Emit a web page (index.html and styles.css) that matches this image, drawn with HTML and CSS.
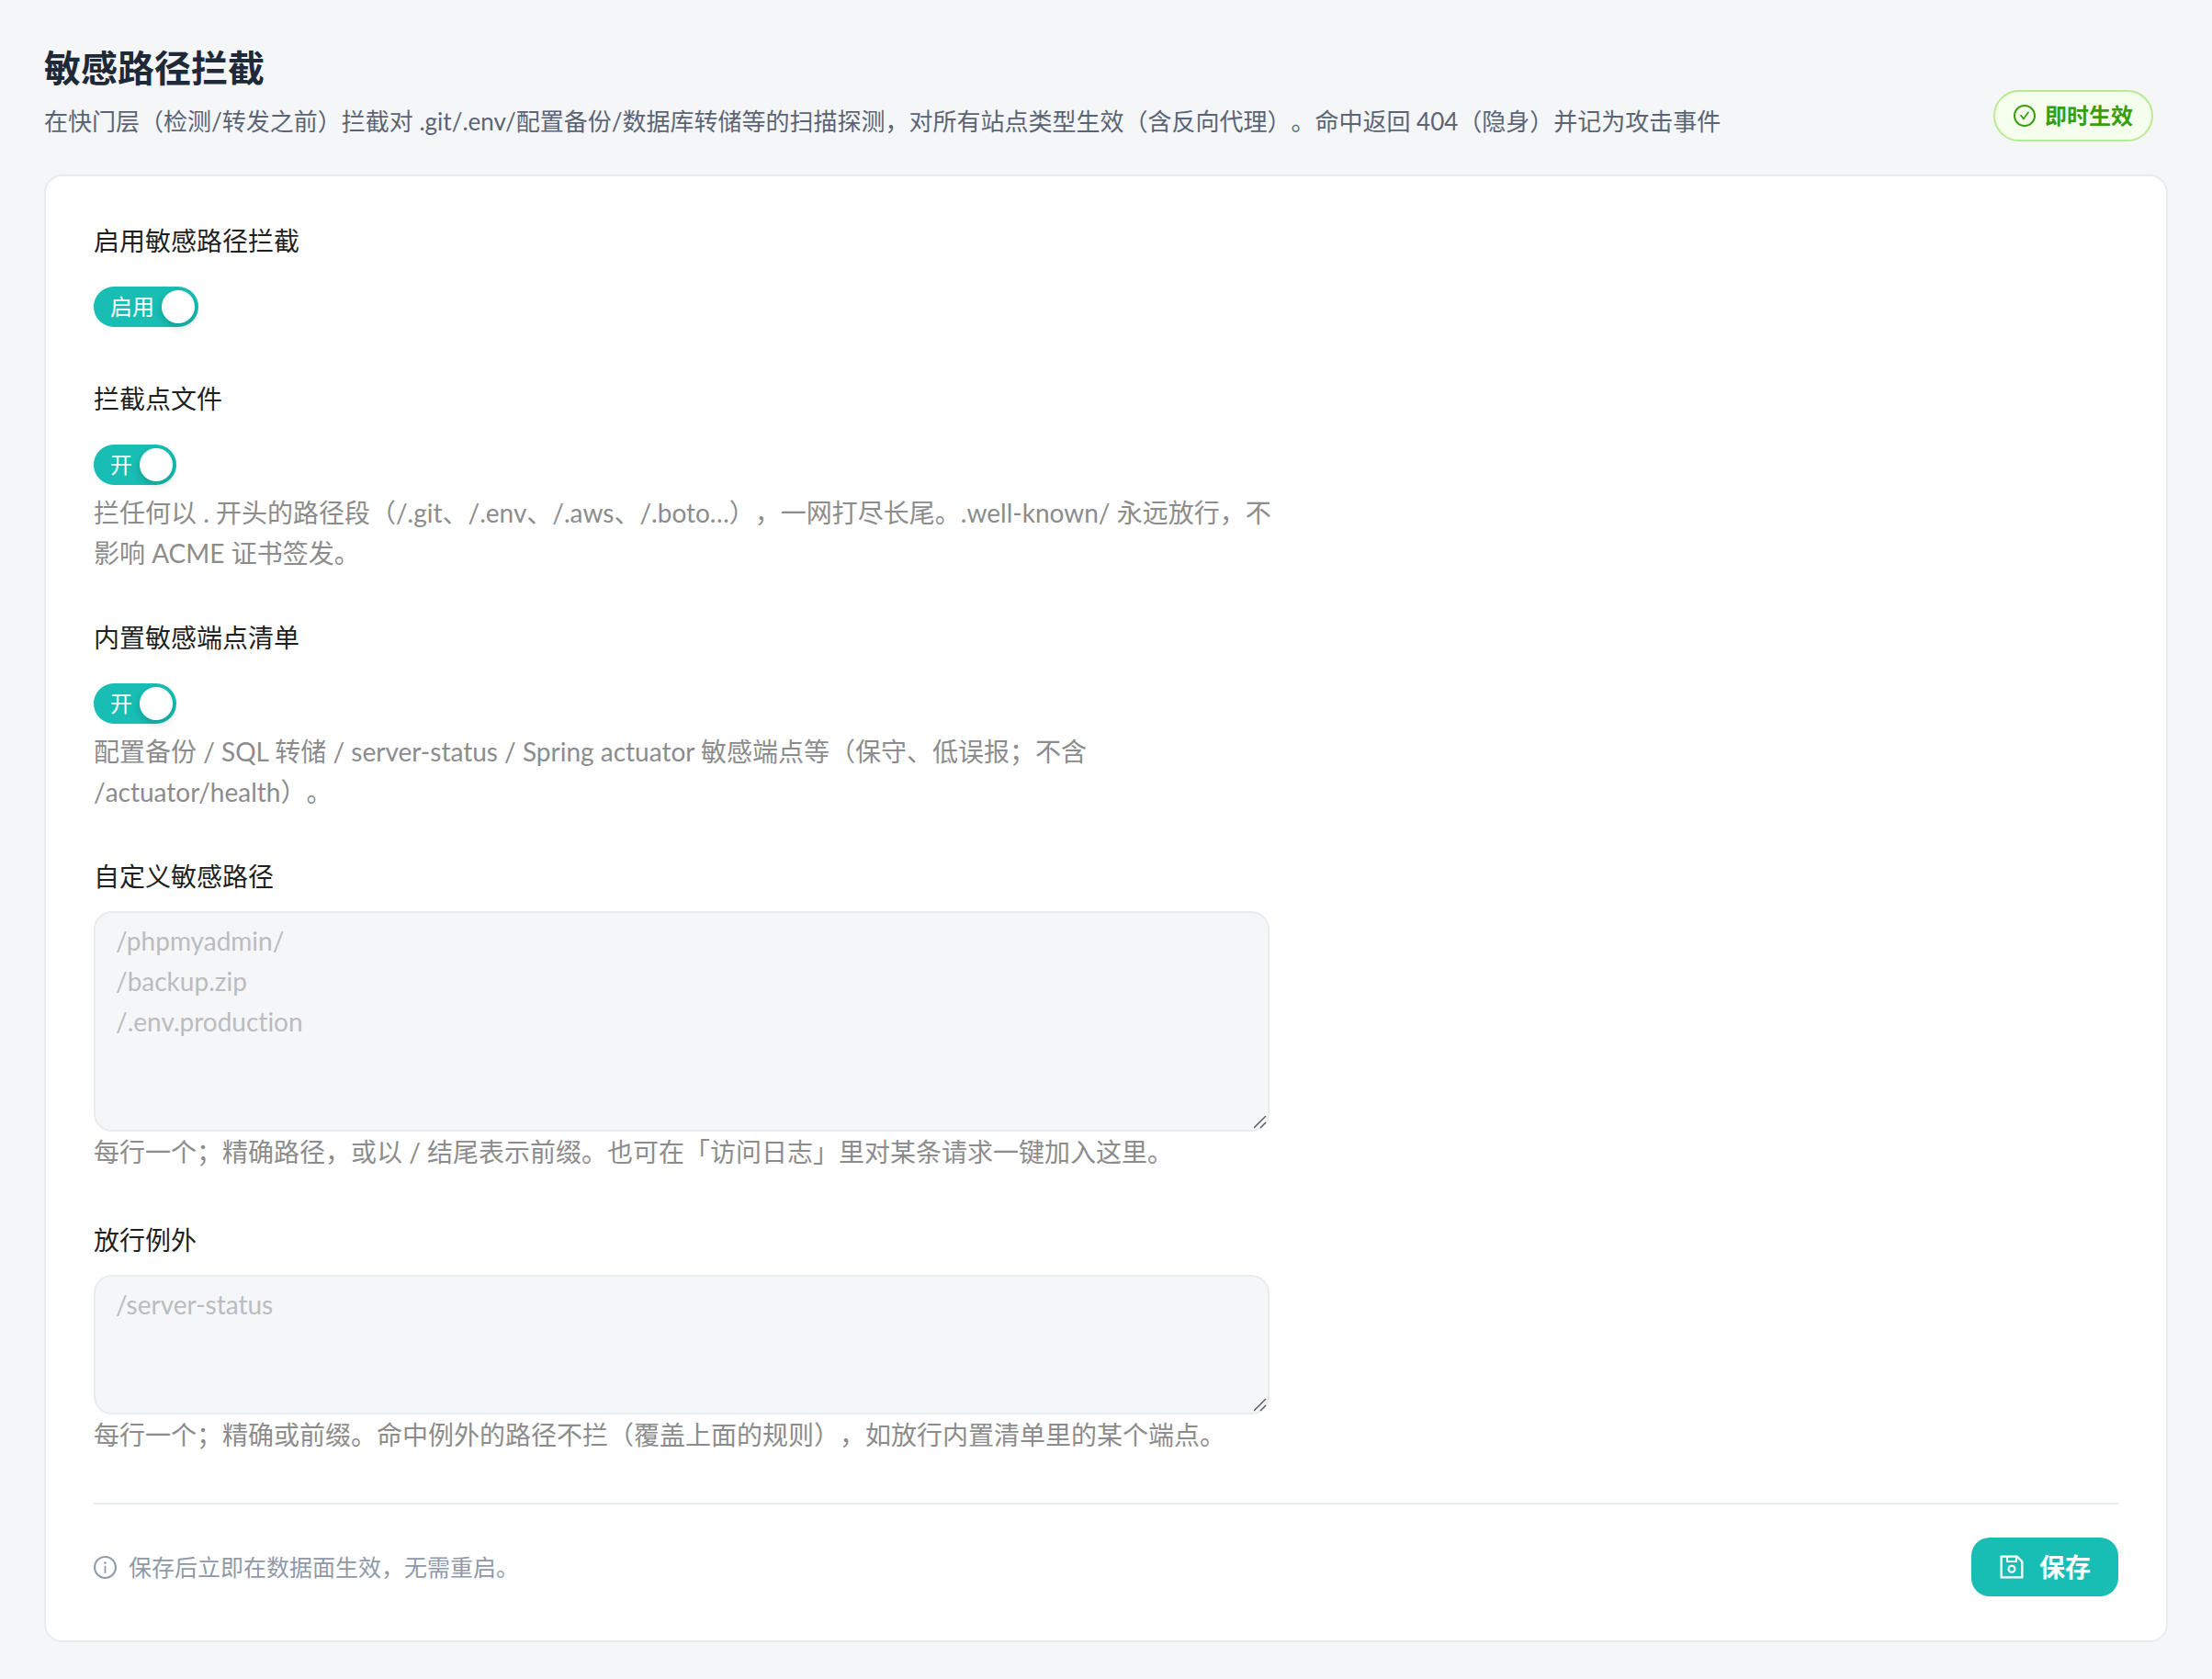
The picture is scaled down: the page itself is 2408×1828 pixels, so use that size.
FILE: index.html
```html
<!DOCTYPE html>
<html lang="zh-CN">
<head>
  <meta charset="UTF-8">
  <meta name="viewport" content="width=device-width, initial-scale=1">
  <title>敏感路径拦截</title>
  <link rel="stylesheet" href="styles.css">
</head>
<body>
  <header class="page-header">
    <div class="page-heading">
      <h1>敏感路径拦截</h1>
      <p>在快门层（检测/转发之前）拦截对 .git/.env/配置备份/数据库转储等的扫描探测，对所有站点类型生效（含反向代理）。命中返回 404（隐身）并记为攻击事件</p>
    </div>
    <span class="badge">
      <svg class="badge-icon" viewBox="64 64 896 896" fill="currentColor" aria-hidden="true">
        <path d="M699 353h-46.9c-10.2 0-19.9 4.9-25.9 13.3L469 584.3l-71.2-98.8c-6-8.3-15.6-13.3-25.9-13.3H325c-6.5 0-10.3 7.4-6.5 12.7l124.6 172.8a31.8 31.8 0 0051.7 0l210.6-292c3.9-5.3.1-12.7-6.4-12.7z"/>
        <path d="M512 64C264.6 64 64 264.6 64 512s200.6 448 448 448 448-200.6 448-448S759.4 64 512 64zm0 820c-205.4 0-372-166.6-372-372s166.6-372 372-372 372 166.6 372 372-166.6 372-372 372z"/>
      </svg>
      即时生效
    </span>
  </header>

  <form class="card">
    <div class="field">
      <label class="field-label" for="enabled">启用敏感路径拦截</label>
      <div class="field-control">
        <label class="switch"><span>启用</span><input type="checkbox" id="enabled" checked></label>
      </div>
    </div>

    <div class="field">
      <label class="field-label" for="dotfiles">拦截点文件</label>
      <div class="field-control">
        <label class="switch"><span>开</span><input type="checkbox" id="dotfiles" checked></label>
      </div>
      <p class="help">拦任何以 . 开头的路径段（/.git、/.env、/.aws、/.boto…），一网打尽长尾。.well-known/ 永远放行，不影响 ACME 证书签发。</p>
    </div>

    <div class="field">
      <label class="field-label" for="builtin">内置敏感端点清单</label>
      <div class="field-control">
        <label class="switch"><span>开</span><input type="checkbox" id="builtin" checked></label>
      </div>
      <p class="help">配置备份 / SQL 转储 / server-status / Spring actuator 敏感端点等（保守、低误报；不含 /actuator/health）。</p>
    </div>

    <div class="field field-text">
      <label class="field-label" for="custom-paths">自定义敏感路径</label>
      <textarea id="custom-paths" rows="5" placeholder="/phpmyadmin/&#10;/backup.zip&#10;/.env.production"></textarea>
      <p class="help">每行一个；精确路径，或以 / 结尾表示前缀。也可在「访问日志」里对某条请求一键加入这里。</p>
    </div>

    <div class="field field-text">
      <label class="field-label" for="allow-paths">放行例外</label>
      <textarea id="allow-paths" rows="3" placeholder="/server-status"></textarea>
      <p class="help">每行一个；精确或前缀。命中例外的路径不拦（覆盖上面的规则），如放行内置清单里的某个端点。</p>
    </div>

    <div class="card-footer">
      <div class="note">
        <svg class="note-icon" viewBox="64 64 896 896" fill="currentColor" aria-hidden="true">
          <path d="M512 64C264.6 64 64 264.6 64 512s200.6 448 448 448 448-200.6 448-448S759.4 64 512 64zm0 820c-205.4 0-372-166.6-372-372s166.6-372 372-372 372 166.6 372 372-166.6 372-372 372z"/>
          <path d="M464 336a48 48 0 1096 0 48 48 0 10-96 0zm72 112h-48c-4.4 0-8 3.6-8 8v272c0 4.4 3.6 8 8 8h48c4.4 0 8-3.6 8-8V456c0-4.4-3.6-8-8-8z"/>
        </svg>
        保存后立即在数据面生效，无需重启。
      </div>
      <button type="button" class="save-btn">
        <svg class="save-icon" viewBox="64 64 896 896" fill="currentColor" aria-hidden="true">
          <path d="M893.3 293.3L730.7 130.7c-7.5-7.5-16.7-13-26.7-16V112H144c-17.7 0-32 14.3-32 32v736c0 17.7 14.3 32 32 32h736c17.7 0 32-14.3 32-32V338.5c0-17-6.7-33.2-18.7-45.2zM384 184h256v104H384V184zm456 656H184V184h136v136c0 17.7 14.3 32 32 32h320c17.7 0 32-14.3 32-32V205.8l136 136V840zM512 442c-79.5 0-144 64.5-144 144s64.5 144 144 144 144-64.5 144-144-64.5-144-144-144zm0 224c-44.2 0-80-35.8-80-80s35.8-80 80-80 80 35.8 80 80-35.8 80-80 80z"/>
        </svg>
        保存
      </button>
    </div>
  </form>
</body>
</html>
```

FILE: styles.css
```css
* {
  box-sizing: border-box;
}
body {
  margin: 0;
  padding: 46px 48px 40px;
  background-color: #f5f6f8;
  color: #1f1f1f;
  font-family: "Segoe UI", Lato, "Noto Sans CJK SC", sans-serif;
  font-size: 28px;
  line-height: 44px;
  font-variant-ligatures: none;
  text-spacing-trim: space-all;
}
h1, p {
  margin: 0;
}
.page-header {
  display: flex;
  justify-content: space-between;
  align-items: flex-end;
  gap: 32px;
  margin-bottom: 36px;
  padding-right: 16px;
}
h1 {
  margin-bottom: 8px;
  font-size: 40px;
  font-weight: 700;
  line-height: 56px;
  color: #1f2937;
}
.page-heading p {
  font-size: 26px;
  color: #5b6475;
}
.badge {
  display: flex;
  flex-shrink: 0;
  align-items: center;
  gap: 10px;
  height: 56px;
  padding: 0 20px;
  border: 2px solid #b7eb8f;
  border-radius: 28px;
  background-color: #f6ffed;
  color: #389e0d;
  font-size: 24px;
  font-weight: 700;
}
.badge-icon {
  width: 24px;
  height: 24px;
}
.card {
  padding: 48px 52px;
  border: 2px solid #e9ecef;
  border-radius: 20px;
  background-color: #ffffff;
}
.field {
  margin-bottom: 48px;
}
.field-text {
  margin-bottom: 52px;
}
.field-label {
  display: block;
  width: fit-content;
  margin-bottom: 16px;
}
.field-control {
  display: flex;
  padding: 12px 0 8px;
}
.switch {
  display: flex;
  align-items: center;
  gap: 8px;
  height: 44px;
  padding: 0 4px 0 18px;
  border-radius: 22px;
  background-color: #bfbfbf;
  color: #ffffff;
  font-size: 24px;
  cursor: pointer;
}
.switch:has(input:checked) {
  background-color: #18bdb4;
}
.switch input {
  appearance: none;
  width: 36px;
  height: 36px;
  margin: 0;
  border-radius: 50%;
  background-color: #ffffff;
  box-shadow: 0 4px 8px rgba(0, 35, 11, 0.2);
  cursor: pointer;
}
.help {
  max-width: 1300px;
  color: #8c8c8c;
}
textarea {
  display: block;
  width: 100%;
  max-width: 1280px;
  padding: 8px 22px;
  border: 2px solid #e9ecef;
  border-radius: 20px;
  background-color: #f5f6f8;
  color: #1f1f1f;
  font: inherit;
  font-variant-ligatures: none;
  resize: vertical;
}
textarea::placeholder {
  color: #bbbcbe;
}
textarea::-webkit-resizer {
  background: url("data:image/svg+xml,%3Csvg xmlns='http://www.w3.org/2000/svg' width='15' height='15'%3E%3Cpath d='M0 13L13 0M7 13L13 7' stroke='%23555' stroke-width='1.4'/%3E%3C/svg%3E") no-repeat;
}
textarea:focus {
  outline: none;
  border-color: #18bdb4;
}
.card-footer {
  display: flex;
  justify-content: space-between;
  align-items: center;
  padding-top: 36px;
  border-top: 2px solid #e9ecef;
}
.note {
  display: flex;
  align-items: center;
  gap: 13px;
  color: #8f99a8;
  font-size: 25px;
}
.note-icon {
  width: 25px;
  height: 25px;
}
.save-btn {
  display: flex;
  align-items: center;
  gap: 16px;
  height: 64px;
  padding: 0 30px;
  border: none;
  border-radius: 20px;
  background-color: #18bdb4;
  color: #ffffff;
  font: inherit;
  font-weight: 700;
  cursor: pointer;
}
.save-btn:hover {
  background-color: #3bcbc2;
}
.save-icon {
  width: 28px;
  height: 28px;
}
```
